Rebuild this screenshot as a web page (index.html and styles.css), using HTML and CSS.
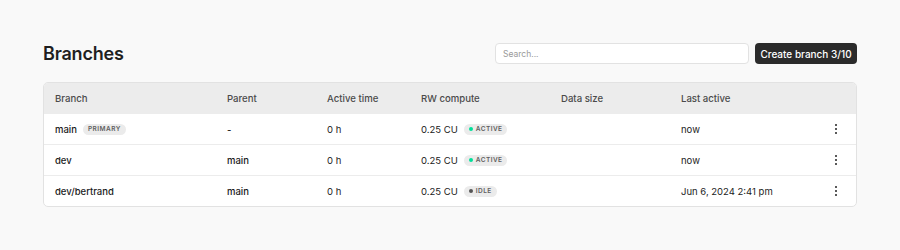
FILE: index.html
```html
<!DOCTYPE html>
<html lang="en">
<head>
<meta charset="utf-8">
<title>Branches</title>
<link rel="stylesheet" href="styles.css">
</head>
<body>
<div class="page">
  <div class="topbar">
    <h1 class="title">Branches</h1>
    <div class="controls">
      <input class="search" type="text" placeholder="Search...">
      <button class="create">Create branch 3/10</button>
    </div>
  </div>
  <div class="table">
    <div class="row head">
      <div class="cell">Branch</div>
      <div class="cell">Parent</div>
      <div class="cell">Active time</div>
      <div class="cell">RW compute</div>
      <div class="cell">Data size</div>
      <div class="cell">Last active</div>
      <div class="cell"></div>
    </div>
    <div class="row">
      <div class="cell strong">main <span class="pill">PRIMARY</span></div>
      <div class="cell strong">-</div>
      <div class="cell">0 h</div>
      <div class="cell">0.25 CU <span class="pill"><span class="dot on"></span>ACTIVE</span></div>
      <div class="cell"></div>
      <div class="cell">now</div>
      <div class="cell menu"><span class="kebab"><i></i><i></i><i></i></span></div>
    </div>
    <div class="row">
      <div class="cell strong">dev</div>
      <div class="cell strong">main</div>
      <div class="cell">0 h</div>
      <div class="cell">0.25 CU <span class="pill"><span class="dot on"></span>ACTIVE</span></div>
      <div class="cell"></div>
      <div class="cell">now</div>
      <div class="cell menu"><span class="kebab"><i></i><i></i><i></i></span></div>
    </div>
    <div class="row">
      <div class="cell strong">dev/bertrand</div>
      <div class="cell strong">main</div>
      <div class="cell">0 h</div>
      <div class="cell">0.25 CU <span class="pill"><span class="dot off"></span>IDLE</span></div>
      <div class="cell"></div>
      <div class="cell">Jun 6, 2024 2:41 pm</div>
      <div class="cell menu"><span class="kebab"><i></i><i></i><i></i></span></div>
    </div>
  </div>
</div>
</body>
</html>
```
FILE: styles.css
```css
* { box-sizing: border-box; }
html, body { margin: 0; padding: 0; }
body {
  background: #f9f9f9;
  font-family: Inter, "Noto Sans", sans-serif;
  color: #1f1f1f;
  width: 900px;
  height: 250px;
  overflow: hidden;
}
.page {
  padding: 43px 43px 0 43px;
}
.topbar {
  display: flex;
  align-items: center;
  justify-content: space-between;
  height: 21px;
  margin-bottom: 18px;
}
.title {
  margin: 0;
  font-size: 18px;
  font-weight: 600;
  letter-spacing: -0.2px;
  color: #1f1f1f;
  line-height: 21px;
}
.controls {
  display: flex;
  gap: 6px;
  height: 21px;
}
.search {
  width: 254px;
  height: 21px;
  border: 1px solid #e2e2e2;
  border-radius: 4px;
  background: #fff;
  padding: 0 7px;
  font-family: Inter, sans-serif;
  font-size: 8.5px;
  color: #333;
  outline: none;
}
.search::placeholder { color: #9a9a9a; }
.create {
  height: 21px;
  width: 102px;
  padding: 0;
  border: none;
  border-radius: 4px;
  background: #2b2b2b;
  color: #fff;
  font-family: Inter, sans-serif;
  font-size: 10px;
  font-weight: 500;
  white-space: nowrap;
}
.table {
  background: #fff;
  border: 1px solid #e2e2e2;
  border-radius: 5px;
  overflow: hidden;
}
.row {
  display: grid;
  grid-template-columns: 172px 100px 94px 140px 120px 1fr 40px;
  height: 31px;
  align-items: center;
  border-top: 1px solid #ececec;
  font-size: 9.5px;
}
.row.head {
  background: #ececec;
  border-top: none;
  height: 30px;
  font-weight: 500;
  font-size: 9.6px;
}
.cell {
  padding-left: 11px;
  display: flex;
  align-items: center;
  white-space: nowrap;
  color: #222;
}
.head .cell { color: #4a4a4a; }
.strong { font-weight: 500; color: #1a1a1a; }
.pill {
  display: inline-flex;
  align-items: center;
  gap: 3px;
  margin-left: 6px;
  height: 11px;
  padding: 0 5px;
  border-radius: 6px;
  background: #ebebeb;
  color: #5f5f5f;
  font-size: 6.5px;
  font-weight: 600;
  letter-spacing: 0.45px;
}
.dot {
  width: 4px;
  height: 4px;
  border-radius: 50%;
}
.dot.on { background: #00e09a; }
.dot.off { background: #555; }
.menu { justify-content: center; padding-left: 0; }
.kebab {
  display: flex;
  flex-direction: column;
  gap: 2px;
}
.kebab i {
  display: block;
  width: 2px;
  height: 2px;
  border-radius: 50%;
  background: #222;
}
```
